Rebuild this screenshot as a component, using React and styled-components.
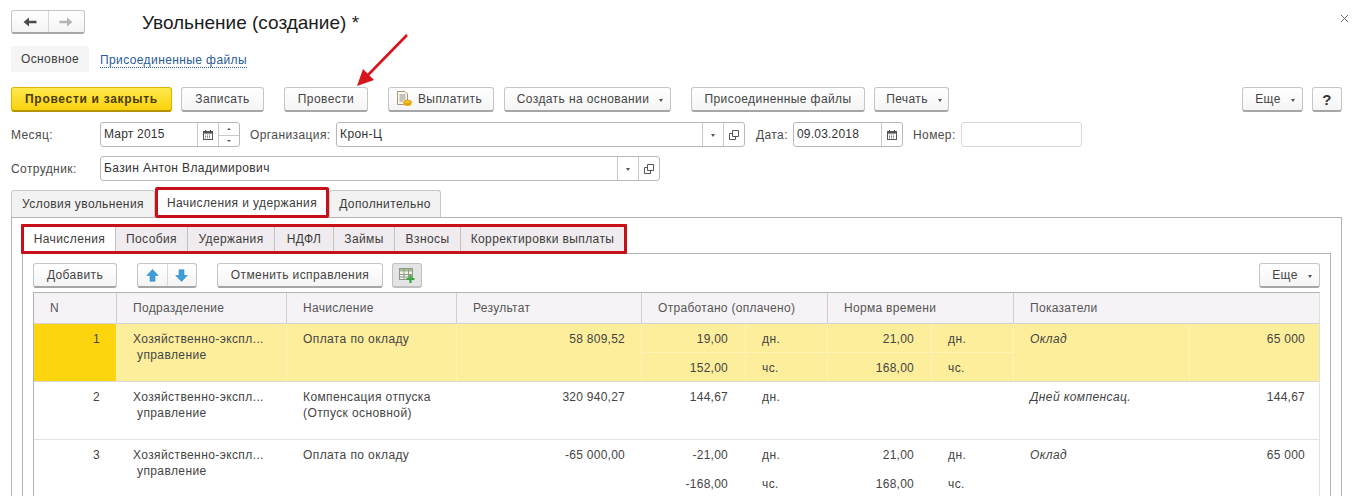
import React from 'react';
import styled, { createGlobalStyle, css } from 'styled-components';

const GlobalStyle = createGlobalStyle`
  html, body {
    margin: 0;
    padding: 0;
    background: #fff;
  }
  body {
    font-family: "Liberation Sans", Arial, sans-serif;
    font-size: 12px;
    letter-spacing: 0.4px;
    color: #3c3c3c;
  }
`;

const Page = styled.div`
  position: relative;
  width: 1355px;
  height: 496px;
  overflow: hidden;
  box-sizing: border-box;
  padding: 10px 13px 0 11px;
`;

const TitleBar = styled.div`
  display: flex;
  align-items: center;
  height: 24px;
  margin-bottom: 12px;
`;

const NavPair = styled.div`
  display: flex;
  width: 74px;
  height: 24px;
  box-sizing: border-box;
  border: 1px solid #c4c4c4;
  border-bottom: 2px solid #a8a8a8;
  border-radius: 3px;
  background: linear-gradient(#fff, #f4f4f4);
`;

const NavCell = styled.div`
  flex: 1;
  display: flex;
  align-items: center;
  justify-content: center;
  & + & {
    border-left: 1px solid #d8d8d8;
  }
`;

const Title = styled.h1`
  margin: 2px 0 0 57px;
  font-size: 19px;
  font-weight: 400;
  letter-spacing: 0;
  color: #1c1c1c;
`;

const Close = styled.div`
  margin-left: auto;
  margin-right: -7px;
  margin-top: -8px;
  display: flex;
`;

const SubNav = styled.div`
  display: flex;
  align-items: center;
  height: 26px;
  margin-bottom: 15px;
`;

const SubActive = styled.div`
  width: 78px;
  height: 26px;
  line-height: 27px;
  text-align: center;
  background: #f5f5f5;
  border-radius: 2px;
  margin-right: 11px;
`;

const SubLink = styled.a`
  margin-top: 2px;
  color: #2a5b96;
  border-bottom: 1px dotted #2a5b96;
  line-height: 14px;
`;

const Toolbar = styled.div`
  display: flex;
  align-items: flex-start;
  height: 25px;
  margin-bottom: 10px;
`;

const Button = styled.button`
  display: flex;
  align-items: center;
  justify-content: center;
  gap: 6px;
  flex: none;
  height: 25px;
  width: ${(p) => p.$w}px;
  margin-right: ${(p) => p.$after || 0}px;
  padding: 0 ${(p) => p.$padRight || 0}px 0 0;
  box-sizing: border-box;
  font: inherit;
  letter-spacing: inherit;
  color: #444;
  border: 1px solid #c6c6c6;
  border-bottom: 2px solid #a6a6a6;
  border-radius: 3px;
  background: linear-gradient(#fff, #f5f5f5);
  ${(p) =>
    p.$primary &&
    css`
      font-weight: 700;
      letter-spacing: 0.7px;
      color: #4a3c00;
      border-color: #d8b400;
      border-bottom-color: #b49600;
      background: linear-gradient(#ffe94f, #fbd20c);
    `}
  ${(p) =>
    p.$push &&
    css`
      margin-left: auto;
    `}
  ${(p) =>
    p.$pressed &&
    css`
      background: #e4e4e4;
      border-color: #c0c0c0;
    `}
`;

const Caret = styled.span`
  display: inline-block;
  flex: none;
  width: 0;
  height: 0;
  margin-top: 2px;
  border-left: 2.5px solid transparent;
  border-right: 2.5px solid transparent;
  border-top: 3px solid #555;
`;

const ButtonCaret = styled(Caret)`
  margin-left: 4px;
  margin-right: -5px;
`;

const QuestionMark = styled.span`
  font-size: 15px;
  font-weight: 700;
  color: #333;
`;

const ButtonPair = styled.div`
  display: flex;
  flex: none;
  width: 60px;
  height: 25px;
  margin-right: 20px;
  box-sizing: border-box;
  border: 1px solid #c6c6c6;
  border-bottom: 2px solid #a6a6a6;
  border-radius: 3px;
  background: linear-gradient(#fff, #f5f5f5);
`;

const FieldRow = styled.div`
  display: flex;
  align-items: center;
  height: 25px;
  margin-bottom: 9px;
`;

const Label = styled.span`
  flex: none;
  width: ${(p) => p.$w}px;
  color: #4a4a4a;
`;

const Field = styled.div`
  display: flex;
  flex: none;
  width: ${(p) => p.$w}px;
  height: 25px;
  margin-right: ${(p) => p.$after || 0}px;
  box-sizing: border-box;
  border: 1px solid ${(p) => (p.$empty ? '#d8d8d8' : '#b8b8b8')};
  border-radius: 3px;
  background: #fff;
`;

const FieldValue = styled.div`
  flex: 1;
  padding-left: 3px;
  line-height: 23px;
  color: #333;
  letter-spacing: ${(p) => (p.$num ? 0.2 : 0.4)}px;
`;

const FieldCell = styled.div`
  flex: none;
  display: flex;
  align-items: center;
  justify-content: center;
  width: 20px;
  border-left: 1px solid #c8c8c8;
`;

const Spin = styled.div`
  flex: none;
  display: grid;
  grid-template-rows: 1fr 1fr;
  width: 20px;
  border-left: 1px solid #c8c8c8;
  & > div {
    display: flex;
    align-items: center;
    justify-content: center;
  }
  & > div + div {
    border-top: 1px solid #c8c8c8;
  }
`;

const TinyUp = styled.span`
  width: 0;
  height: 0;
  border-left: 2px solid transparent;
  border-right: 2px solid transparent;
  border-bottom: 2px solid #555;
`;

const TinyDown = styled(TinyUp)`
  border-bottom: none;
  border-top: 2px solid #555;
`;

const OuterTabs = styled.div`
  display: flex;
  height: 27px;
  align-items: flex-end;
  position: relative;
  z-index: 1;
`;

const OuterTab = styled.div`
  flex: none;
  box-sizing: border-box;
  width: ${(p) => p.$w}px;
  height: 27px;
  line-height: 26px;
  text-align: center;
  background: #f2f2f2;
  border: 1px solid #c8c8c8;
  border-bottom: none;
  border-radius: 3px 3px 0 0;
  color: #3c3c3c;
  ${(p) =>
    p.$marked &&
    css`
      height: 31px;
      line-height: 27px;
      margin-bottom: -1px;
      background: #fff;
      border: 3px solid #c8101a;
      border-radius: 2px;
    `}
`;

const OuterPanel = styled.div`
  height: 279px;
  box-sizing: border-box;
  border: 1px solid #b4b4b4;
  border-bottom: none;
  padding: 6px 10px 0 10px;
`;

const InnerTabs = styled.div`
  display: flex;
  width: 606px;
  height: 30px;
  box-sizing: border-box;
  border: 3px solid #c8101a;
  border-radius: 1px;
  margin-left: -1px;
  position: relative;
  z-index: 1;
  background: #f0ebee;
`;

const InnerTab = styled.div`
  flex: none;
  box-sizing: border-box;
  width: ${(p) => p.$w}px;
  line-height: 25px;
  text-align: center;
  border-right: 1px solid #c4c0c4;
  color: #3c3c3c;
  &:last-child {
    border-right: none;
  }
  ${(p) =>
    p.$active &&
    css`
      background: #fff;
    `}
`;

const InnerPanel = styled.div`
  height: 243px;
  margin-top: -1px;
  box-sizing: border-box;
  border: 1px solid #b4b4b4;
  border-bottom: none;
  padding: 9px 10px 0 10px;
`;

const TableTools = styled.div`
  display: flex;
  height: 25px;
  margin-bottom: 4px;
`;

const Table = styled.div`
  border-left: 1px solid #b4b4b4;
  border-top: 1px solid #b4b4b4;
  border-right: 1px solid #e0e0e0;
`;

const columns = css`
  display: grid;
  grid-template-columns: 82px 170px 170px 185px 104px 82px 104px 82px 176px 1fr;
`;

const HeaderRow = styled.div`
  ${columns}
  height: 31px;
  box-sizing: border-box;
  background: #f5f3f5;
  border-bottom: 1px solid #d4d4d4;
`;

const HeaderCell = styled.div`
  grid-column: span ${(p) => p.$span || 1};
  box-sizing: border-box;
  padding-left: 16px;
  line-height: 30px;
  color: #555;
  letter-spacing: 0.3px;
  border-left: ${(p) => (p.$first ? 'none' : '1px solid #d0d0d0')};
`;

const Row = styled.div`
  ${columns}
  grid-template-rows: 29px 28px;
  box-sizing: border-box;
  height: 58px;
  border-bottom: 1px solid ${(p) => (p.$selected ? '#d8d8d8' : '#e2e2e2')};
  background: ${(p) => (p.$selected ? '#fdee9c' : '#fff')};
`;

const Cell = styled.div`
  grid-column: ${(p) => p.$col};
  grid-row: ${(p) => p.$row || '1 / span 2'};
  box-sizing: border-box;
  padding: 7px ${(p) => p.$pad ?? (p.$right ? 17 : 16)}px 0 16px;
  line-height: 16px;
  color: #444;
  letter-spacing: ${(p) => (p.$right ? 0.25 : 0.4)}px;
  text-align: ${(p) => (p.$right ? 'right' : 'left')};
  font-style: ${(p) => (p.$italic ? 'italic' : 'normal')};
  border-left: 1px solid ${(p) => (p.$selected ? '#fff3b8' : 'transparent')};
  ${(p) =>
    p.$selected &&
    p.$split &&
    css`
      border-bottom: 1px solid #fff3b8;
    `}
`;

const NumberCell = styled(Cell)`
  background: ${(p) => (p.$marker ? '#fcd50f' : 'transparent')};
  border-left: none;
`;

const Indented = styled.div`
  padding-left: 4px;
`;

const ArrowMark = styled.svg`
  position: absolute;
  left: 350px;
  top: 30px;
`;

function BackIcon() {
  return (
    <svg width="14" height="12" viewBox="0 0 14 12">
      <path d="M0.5 6 L6 1.5 V4.7 H13.5 V7.3 H6 V10.5 Z" fill="#4a4a4a" />
    </svg>
  );
}

function ForwardIcon() {
  return (
    <svg width="14" height="12" viewBox="0 0 14 12">
      <path d="M13.5 6 L8 1.5 V4.7 H0.5 V7.3 H8 V10.5 Z" fill="#b4b4b4" />
    </svg>
  );
}

function CloseIcon() {
  return (
    <svg width="9" height="9" viewBox="0 0 9 9">
      <path d="M1 1 L8 8 M8 1 L1 8" stroke="#666" strokeWidth="1" fill="none" />
    </svg>
  );
}

function CalendarIcon() {
  return (
    <svg width="10" height="10" viewBox="0 0 10 10">
      <rect x="0.5" y="1.5" width="9" height="8" fill="#fff" stroke="#555" />
      <rect x="1" y="2" width="8" height="1.6" fill="#555" />
      <path d="M2.5 0 V2 M7.5 0 V2" stroke="#444" fill="none" />
      <path d="M2 5 H8 M2 6.5 H8 M2 8 H8" stroke="#777" strokeDasharray="1 1" fill="none" />
    </svg>
  );
}

function OpenIcon() {
  return (
    <svg width="10" height="10" viewBox="0 0 10 10">
      <path d="M3.5 0.5 H9.5 V6.5 H3.5 Z" fill="none" stroke="#555" />
      <path d="M3.5 3.5 H0.5 V9.5 H6.5 V6.5" fill="none" stroke="#555" />
    </svg>
  );
}

function PayIcon() {
  return (
    <svg width="16" height="16" viewBox="0 0 16 16">
      <path d="M1.5 0.5 H9 L11.5 3 V13.5 H1.5 Z" fill="#fbf7ea" stroke="#a89a7c" />
      <path d="M3.5 4 H9.5 M3.5 6 H9.5 M3.5 8 H9.5 M3.5 10 H7" stroke="#8c8c8c" fill="none" />
      <path d="M7.5 11 V13 C7.5 14.3 9.3 15 11.5 15 C13.7 15 15.5 14.3 15.5 13 V11 Z" fill="#e9a90f" />
      <ellipse cx="11.5" cy="11" rx="4" ry="2" fill="#f5c21b" stroke="#b98a0c" strokeWidth="0.6" />
    </svg>
  );
}

function BlueArrow({ down }) {
  return (
    <svg width="13" height="13" viewBox="0 0 13 13">
      <path
        d={down ? 'M6.5 12.5 L0.8 6.5 H4 V0.8 H9 V6.5 H12.2 Z' : 'M6.5 0.5 L12.2 6.5 H9 V12.2 H4 V6.5 H0.8 Z'}
        fill="#3c9fdc"
        stroke="#2f86c4"
        strokeWidth="0.6"
      />
    </svg>
  );
}

function TablePlusIcon() {
  return (
    <svg width="18" height="18" viewBox="0 0 18 18">
      <rect x="1.5" y="2.5" width="13" height="11" fill="#f1f1ea" stroke="#8f9a84" />
      <rect x="2" y="3" width="12" height="2.5" fill="#a5bb96" />
      <path d="M6 2.5 V13.5 M10.5 2.5 V13.5 M1.5 8.5 H14.5 M1.5 11 H14.5" stroke="#8f9a84" fill="none" />
      <path d="M12.5 9 V17 M8.5 13 H16.5" stroke="#3aa53f" strokeWidth="2.2" fill="none" />
    </svg>
  );
}

const rows = [
  {
    n: 1,
    selected: true,
    accrual: ['Оплата по окладу'],
    result: '58 809,52',
    worked: ['19,00', '152,00'],
    units: ['дн.', 'чс.'],
    norm: ['21,00', '168,00'],
    normUnits: ['дн.', 'чс.'],
    indicator: 'Оклад',
    value: '65 000',
  },
  {
    n: 2,
    accrual: ['Компенсация отпуска', '(Отпуск основной)'],
    result: '320 940,27',
    worked: ['144,67'],
    units: ['дн.'],
    norm: [],
    normUnits: [],
    indicator: 'Дней компенсац.',
    value: '144,67',
  },
  {
    n: 3,
    accrual: ['Оплата по окладу'],
    result: '-65 000,00',
    worked: ['-21,00', '-168,00'],
    units: ['дн.', 'чс.'],
    norm: ['21,00', '168,00'],
    normUnits: ['дн.', 'чс.'],
    indicator: 'Оклад',
    value: '65 000',
  },
];

function SplitCells({ col, values, right, selected }) {
  return [0, 1].map((i) => (
    <Cell key={i} $col={col} $row={i + 1} $right={right} $selected={selected} $split={i === 0}>
      {values[i]}
    </Cell>
  ));
}

function DataRow({ row }) {
  const sel = row.selected;
  return (
    <Row $selected={sel}>
      <NumberCell $col={1} $right $pad={16} $marker={sel}>
        {row.n}
      </NumberCell>
      <Cell $col={2} $selected={sel}>
        Хозяйственно-экспл...
        <Indented>управление</Indented>
      </Cell>
      <Cell $col={3} $selected={sel}>
        {row.accrual.map((line) => (
          <div key={line}>{line}</div>
        ))}
      </Cell>
      <Cell $col={4} $right $pad={16} $selected={sel}>
        {row.result}
      </Cell>
      <SplitCells col={5} values={row.worked} right selected={sel} />
      <SplitCells col={6} values={row.units} selected={sel} />
      <SplitCells col={7} values={row.norm} right selected={sel} />
      <SplitCells col={8} values={row.normUnits} selected={sel} />
      <Cell $col={9} $italic $selected={sel}>
        {row.indicator}
      </Cell>
      <Cell $col={10} $right $pad={14} $selected={sel}>
        {row.value}
      </Cell>
    </Row>
  );
}

export default function App() {
  return (
    <Page>
      <GlobalStyle />
      <TitleBar>
        <NavPair>
          <NavCell>
            <BackIcon />
          </NavCell>
          <NavCell>
            <ForwardIcon />
          </NavCell>
        </NavPair>
        <Title>Увольнение (создание) *</Title>
        <Close>
          <CloseIcon />
        </Close>
      </TitleBar>

      <SubNav>
        <SubActive>Основное</SubActive>
        <SubLink>Присоединенные файлы</SubLink>
      </SubNav>

      <Toolbar>
        <Button $primary $w={161} $after={9}>
          Провести и закрыть
        </Button>
        <Button $w={83} $after={20}>
          Записать
        </Button>
        <Button $w={84} $after={20}>
          Провести
        </Button>
        <Button $w={106} $after={10} $padRight={4}>
          <PayIcon />
          Выплатить
        </Button>
        <Button $w={167} $after={20}>
          Создать на основании <ButtonCaret />
        </Button>
        <Button $w={174} $after={9}>
          Присоединенные файлы
        </Button>
        <Button $w={75}>
          Печать <ButtonCaret />
        </Button>
        <Button $push $w={61} $after={9}>
          Еще <ButtonCaret />
        </Button>
        <Button $w={30}>
          <QuestionMark>?</QuestionMark>
        </Button>
      </Toolbar>

      <FieldRow>
        <Label $w={89}>Месяц:</Label>
        <Field $w={140} $after={10}>
          <FieldValue $num>Март 2015</FieldValue>
          <FieldCell>
            <CalendarIcon />
          </FieldCell>
          <Spin>
            <div>
              <TinyUp />
            </div>
            <div>
              <TinyDown />
            </div>
          </Spin>
        </Field>
        <Label $w={86}>Организация:</Label>
        <Field $w={409} $after={11}>
          <FieldValue>Крон-Ц</FieldValue>
          <FieldCell>
            <Caret />
          </FieldCell>
          <FieldCell>
            <OpenIcon />
          </FieldCell>
        </Field>
        <Label $w={37}>Дата:</Label>
        <Field $w={110} $after={10}>
          <FieldValue $num>09.03.2018</FieldValue>
          <FieldCell>
            <CalendarIcon />
          </FieldCell>
        </Field>
        <Label $w={48}>Номер:</Label>
        <Field $w={121} $empty />
      </FieldRow>

      <FieldRow>
        <Label $w={89}>Сотрудник:</Label>
        <Field $w={560}>
          <FieldValue>Базин Антон Владимирович</FieldValue>
          <FieldCell>
            <Caret />
          </FieldCell>
          <FieldCell>
            <OpenIcon />
          </FieldCell>
        </Field>
      </FieldRow>

      <OuterTabs>
        <OuterTab $w={144}>Условия увольнения</OuterTab>
        <OuterTab $w={174} $marked>
          Начисления и удержания
        </OuterTab>
        <OuterTab $w={112}>Дополнительно</OuterTab>
      </OuterTabs>

      <OuterPanel>
        <InnerTabs>
          <InnerTab $w={92} $active>
            Начисления
          </InnerTab>
          <InnerTab $w={72}>Пособия</InnerTab>
          <InnerTab $w={87}>Удержания</InnerTab>
          <InnerTab $w={59}>НДФЛ</InnerTab>
          <InnerTab $w={61}>Займы</InnerTab>
          <InnerTab $w={66}>Взносы</InnerTab>
          <InnerTab $w={163}>Корректировки выплаты</InnerTab>
        </InnerTabs>

        <InnerPanel>
          <TableTools>
            <Button $w={84} $after={20}>
              Добавить
            </Button>
            <ButtonPair>
              <NavCell>
                <BlueArrow />
              </NavCell>
              <NavCell>
                <BlueArrow down />
              </NavCell>
            </ButtonPair>
            <Button $w={166} $after={9}>
              Отменить исправления
            </Button>
            <Button $w={30} $pressed>
              <TablePlusIcon />
            </Button>
            <Button $push $w={61}>
              Еще <ButtonCaret />
            </Button>
          </TableTools>

          <Table>
            <HeaderRow>
              <HeaderCell $first>N</HeaderCell>
              <HeaderCell>Подразделение</HeaderCell>
              <HeaderCell>Начисление</HeaderCell>
              <HeaderCell>Результат</HeaderCell>
              <HeaderCell $span={2}>Отработано (оплачено)</HeaderCell>
              <HeaderCell $span={2}>Норма времени</HeaderCell>
              <HeaderCell $span={2}>Показатели</HeaderCell>
            </HeaderRow>
            {rows.map((row) => (
              <DataRow key={row.n} row={row} />
            ))}
          </Table>
        </InnerPanel>
      </OuterPanel>

      <ArrowMark width="65" height="62" viewBox="0 0 65 62">
        <path d="M57 5 L18 45" stroke="#d9141a" strokeWidth="2.6" fill="none" />
        <path d="M7 56 L13 39 L24 50 Z" fill="#d9141a" />
      </ArrowMark>
    </Page>
  );
}
